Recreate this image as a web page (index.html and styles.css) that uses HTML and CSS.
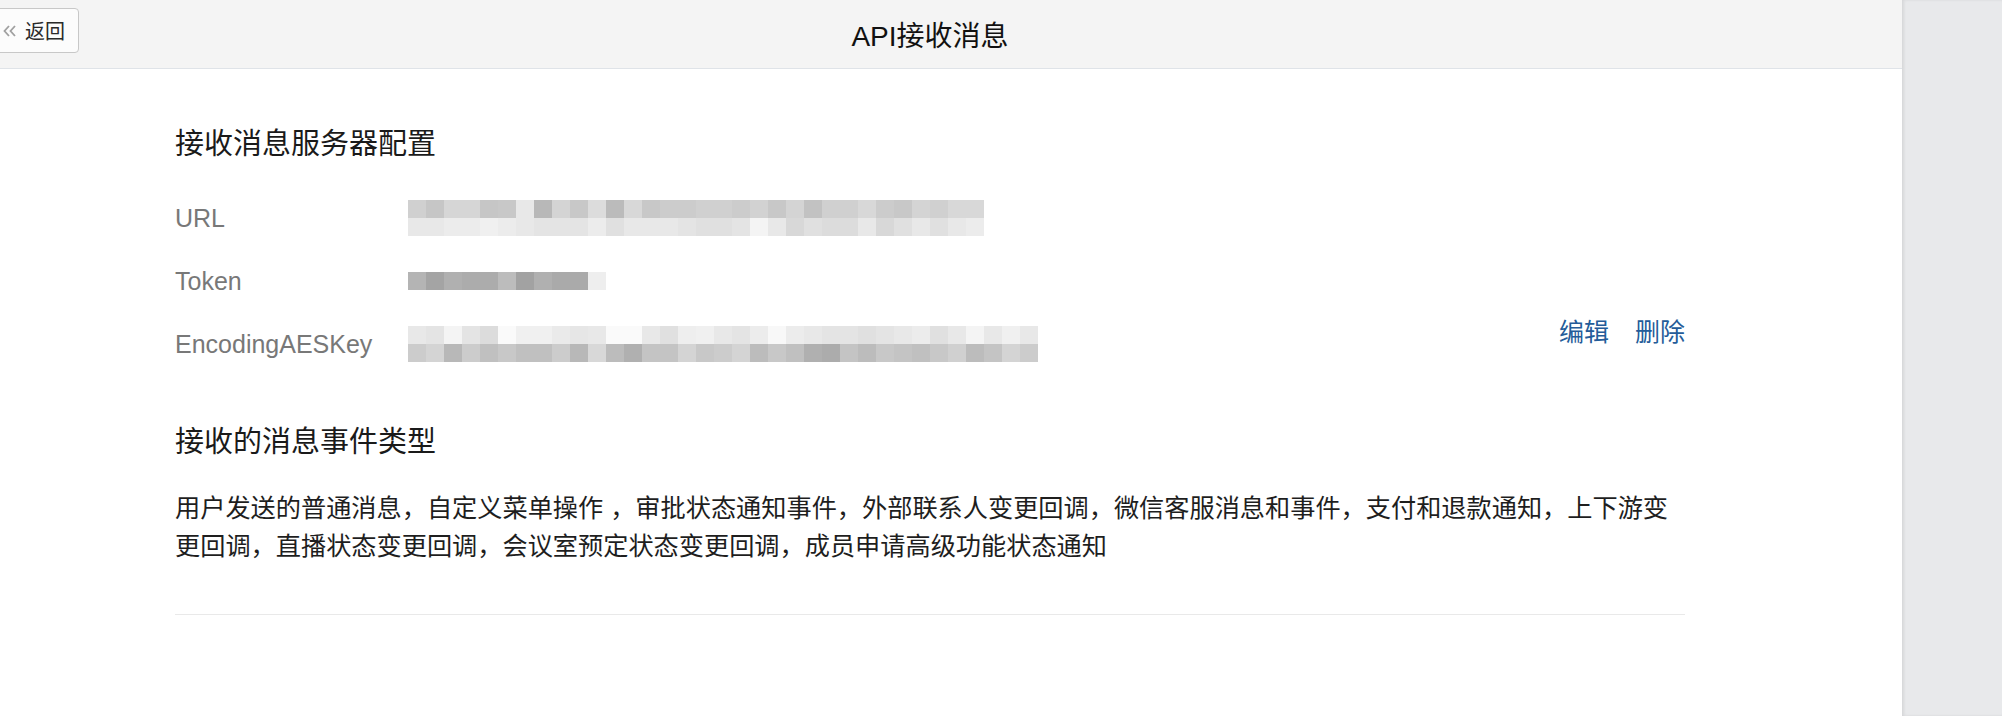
FILE: index.html
```html
<!DOCTYPE html>
<html lang="zh-CN">
<head>
  <meta charset="UTF-8" />
  <meta name="viewport" content="width=device-width, initial-scale=1.0"/>
  <title>API接收消息</title>
  <link rel="stylesheet" href="styles.css">
</head>
<body>
  <div class="page">
    <div class="main">
      <header class="topbar">
        <button class="back">
          <svg width="13" height="12" viewBox="0 0 13 12">
            <polyline points="6,1 1.5,6 6,11" />
            <polyline points="12,1 7.5,6 12,11" />
          </svg>
          <span>返回</span>
        </button>
        <h1 class="title">API接收消息</h1>
        <span></span>
      </header>

      <div class="content">
        <section class="config">
          <h2>接收消息服务器配置</h2>
          <div class="config-body">
            <div class="fields">
              <div class="field">
                <span class="label">URL</span>
                <div class="mosaic" data-rows="d0c6d6d6c6c8e8b8d4c8dcbbd8c8ccccd0d0ccd2c8d4c2d0d0d8ccc8d4d0d8d8|e8e8ececf0ece8e4e4e4ece0e8e8e8e4e0e0e4f4e8d8e0dcdce8d8e0e8e0e8ec"></div>
              </div>
              <div class="field">
                <span class="label">Token</span>
                <div class="mosaic" data-rows="b4a4b0acacbca2b0aaaaee"></div>
              </div>
              <div class="field">
                <span class="label">EncodingAESKey</span>
                <div class="mosaic" data-rows="e8e4f4e4dcfaf0f0eae6e8fafae8e0eef0e8e4ecf8ece8e4e4e0e4e8ece0e8f4e8f0e8|ccd4b8ccc0c8c0c0ccb8d8bcb0c4c4d4c8ccd4bcc8c0b0acc4bcc8c4c0c8d0bcc4d4cc"></div>
              </div>
            </div>
            <div class="actions">
              <a href="#">编辑</a>
              <a href="#">删除</a>
            </div>
          </div>
        </section>

        <section class="events">
          <h2>接收的消息事件类型</h2>
          <p>用户发送的普通消息，自定义菜单操作 ，审批状态通知事件，外部联系人变更回调，微信客服消息和事件，支付和退款通知，上下游变更回调，直播状态变更回调，会议室预定状态变更回调，成员申请高级功能状态通知</p>
        </section>
      </div>
    </div>
    <div class="side"></div>
  </div>

  <script>
    // masked values: each row is a string of 2-digit grey levels
    document.querySelectorAll('.mosaic').forEach(mosaic => {
      mosaic.dataset.rows.split('|').forEach(row => {
        const rowEl = document.createElement('div');
        rowEl.className = 'mosaic-row';
        for (let i = 0; i < row.length; i += 2) {
          const g = row.slice(i, i + 2);
          const block = document.createElement('span');
          block.style.background = `#${g}${g}${g}`;
          rowEl.appendChild(block);
        }
        mosaic.appendChild(rowEl);
      });
    });
  </script>
</body>
</html>
```

FILE: styles.css
```css
body {
  margin: 0;
  font-family: "Liberation Sans", "Noto Sans CJK SC", sans-serif;
  color: #1a1a1a;
}

.page {
  display: flex;
  min-height: 100vh;
}

.main {
  width: 1902px;
  background-color: #ffffff;
}

.side {
  flex: 1;
  background-color: #e8e9eb;
  box-shadow: inset 2px 0 3px rgba(0, 0, 0, 0.08);
}

/* top bar */
.topbar {
  display: grid;
  grid-template-columns: 1fr auto 1fr;
  height: 68px;
  padding-right: 42px;
  background-color: #f4f4f4;
  border-bottom: 1px solid #dfe3e8;
}

.back {
  justify-self: start;
  align-self: start;
  display: flex;
  align-items: center;
  gap: 9px;
  height: 45px;
  margin: 8px 0 0 -6px;
  padding: 0 13px 0 8px;
  background-color: #fcfcfc;
  border: 1px solid #c8c8c8;
  border-radius: 4px;
  font-family: inherit;
  font-size: 20px;
  color: #2a2a2a;
  cursor: pointer;
}

.back svg {
  fill: none;
  stroke: #a0a0a0;
  stroke-width: 1.8;
}

.title {
  align-self: center;
  margin: 0;
  font-size: 28px;
  font-weight: normal;
  color: #111111;
}

/* content */
.content {
  width: 1510px;
  padding: 55px 0 0 175px;
}

h2 {
  margin: 0;
  font-size: 29px;
  font-weight: normal;
  line-height: 40px;
  color: #1a1a1a;
}

.config-body {
  display: flex;
  justify-content: space-between;
}

.fields {
  display: flex;
  flex-direction: column;
  gap: 36px;
  margin-top: 36px;
}

.field {
  display: flex;
  align-items: center;
}

.label {
  width: 233px;
  font-size: 25px;
  line-height: 18px;
  color: #787878;
}

.mosaic-row {
  display: flex;
}

.mosaic-row span {
  width: 18px;
  height: 18px;
}

.actions {
  align-self: flex-end;
  display: flex;
  gap: 26px;
  margin-bottom: 16px;
}

.actions a {
  font-size: 25px;
  line-height: 28px;
  color: #245c99;
  text-decoration: none;
}

.events {
  margin-top: 60px;
  padding-bottom: 49px;
  border-bottom: 1px solid #e9e9e9;
}

.events p {
  margin: 27px 0 0;
  font-size: 25.2px;
  line-height: 38px;
  color: #1e1e1e;
}
```
